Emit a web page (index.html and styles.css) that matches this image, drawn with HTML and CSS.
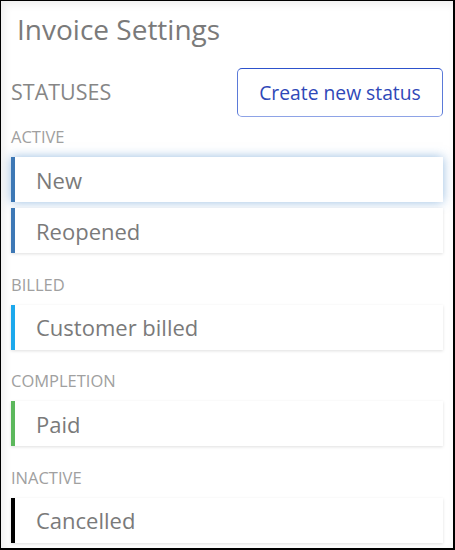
FILE: index.html
```html
<!DOCTYPE html>
<html>
<head>
<meta charset="utf-8">
<link rel="stylesheet" href="styles.css">
</head>
<body>
<div class="frame">
  <h1 class="title">Invoice Settings</h1>
  <div class="header">
    <span class="heading">STATUSES</span>
    <button class="create-btn">Create new status</button>
  </div>
  <div class="group">
    <div class="group-label">ACTIVE</div>
    <div class="status status-active focused">New</div>
    <div class="status status-active">Reopened</div>
  </div>
  <div class="group">
    <div class="group-label">BILLED</div>
    <div class="status status-billed">Customer billed</div>
  </div>
  <div class="group">
    <div class="group-label">COMPLETION</div>
    <div class="status status-completion">Paid</div>
  </div>
  <div class="group">
    <div class="group-label">INACTIVE</div>
    <div class="status status-inactive">Cancelled</div>
  </div>
</div>
</body>
</html>
```
FILE: styles.css
```css
* { box-sizing: border-box; }
html, body { margin: 0; padding: 0; background: #fff; }
body { font-family: "Open Sans", "Noto Sans", sans-serif; }
.frame {
  width: 455px;
  height: 550px;
  border-top: 1px solid #000;
  border-left: 1px solid #000;
  border-right: 2px solid #000;
  border-bottom: 2px solid #000;
  box-shadow: inset 3px 3px 9px rgba(0,0,0,0.07);
  padding: 0 10px;
  overflow: hidden;
}
.title {
  margin: 9px 0 0 6px;
  font-size: 28px;
  font-weight: 400;
  color: #7a7a7a;
  line-height: 38px;
}
.header {
  display: flex;
  justify-content: space-between;
  align-items: center;
  margin-top: 20px;
}
.heading {
  font-size: 21.5px;
  color: #868686;
  line-height: 30px;
  margin-bottom: 2px;
}
.create-btn {
  font-family: inherit;
  width: 206px;
  height: 49px;
  background: #fff;
  border: 1px solid #5b7ad8;
  border-top-color: #2d52cc;
  border-bottom-color: #8ea3e6;
  border-radius: 5px;
  color: #2f48b8;
  font-size: 19.3px;
  padding: 0;
}
.group-label {
  font-size: 16.5px;
  color: #a0a0a0;
  line-height: 20px;
  margin: 21.5px 0 10px;
}
.header + .group .group-label { margin-top: 10px; }
.status {
  height: 45px;
  display: flex;
  align-items: center;
  padding-left: 21px;
  border-left: 4px solid #3d78b5;
  background: #fff;
  box-shadow: 0 1px 3px rgba(0,0,0,0.13);
  color: #7a7a7a;
  font-size: 22px;
}
.status + .status { margin-top: 6px; }
.status.focused { box-shadow: 0 0 10px rgba(70,135,200,0.55); }
.status-billed { border-left-color: #1ca8ec; }
.status-completion { border-left-color: #5cb85c; }
.status-inactive { border-left-color: #000; }
```
